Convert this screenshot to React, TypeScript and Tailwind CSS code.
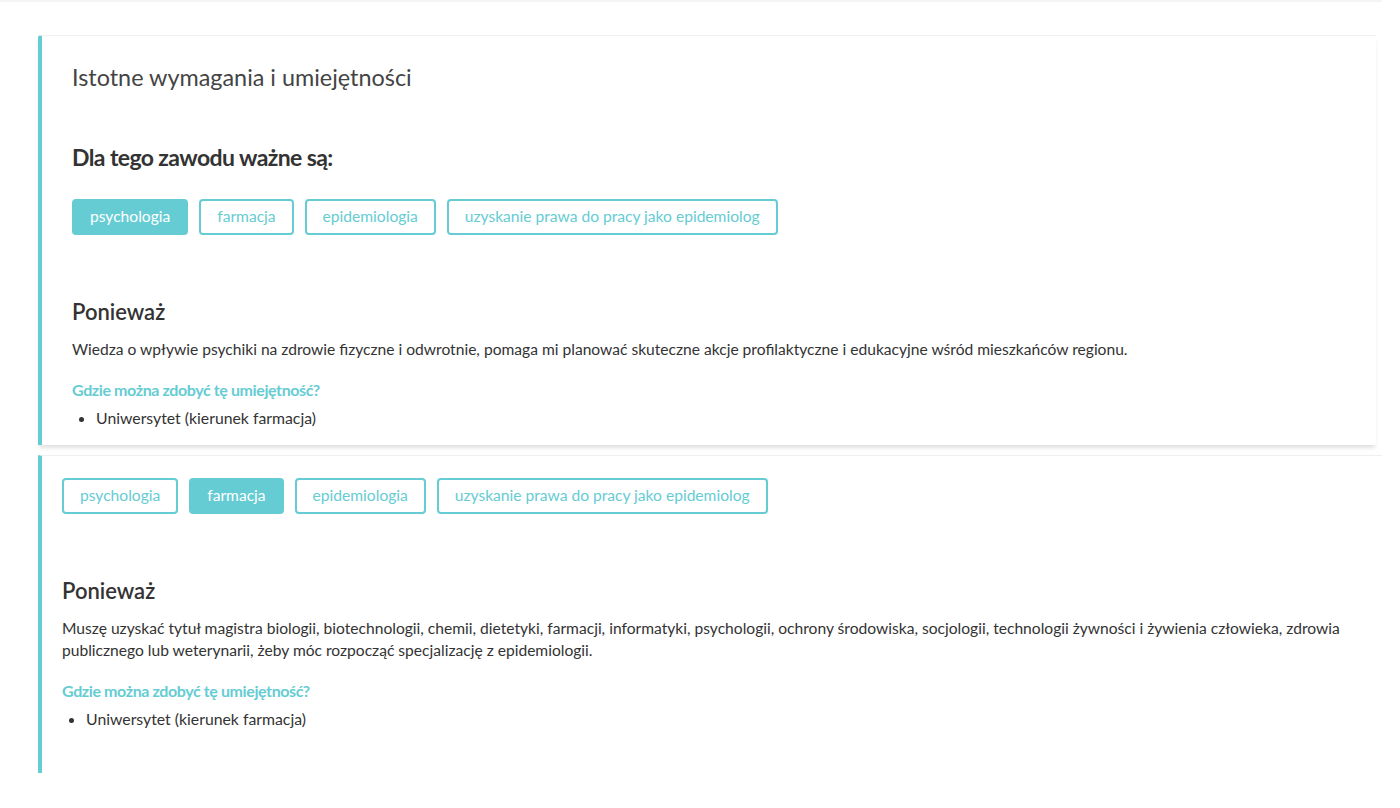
import React from 'react'

const skills = ['psychologia', 'farmacja', 'epidemiologia', 'uzyskanie prawa do pracy jako epidemiolog']

const Tags = ({ active }: { active: number }) => (
    <div className="flex gap-[11px]">
        {skills.map((s, i) => (
            <button
                key={s}
                className={
                    i === active
                        ? 'h-9 px-[16px] rounded-[4px] border-2 border-[#66ccd3] bg-[#66ccd3] text-white text-[15.6px]'
                        : 'h-9 px-[16px] rounded-[4px] border-2 border-[#66ccd3] bg-white text-[#66ccd3] text-[15.6px]'
                }
            >
                {s}
            </button>
        ))}
    </div>
)

const Reason = ({ text }: { text: string }) => (
    <>
        <h3 className="mt-[62px] text-[22px] leading-[30px] font-semibold text-[#333]">Ponieważ</h3>
        <p className="mt-[11px] text-[15.6px] leading-[22px] text-[#333]">{text}</p>
        <h4 className="mt-[19px] text-[16px] leading-[22px] font-bold tracking-[-0.4px] text-[#66ccd3]">
            Gdzie można zdobyć tę umiejętność?
        </h4>
        <ul className="mt-[6px] list-disc pl-[24px] text-[15.8px] leading-[22px] text-[#333]">
            <li>Uniwersytet (kierunek farmacja)</li>
        </ul>
    </>
)

export default function App() {
    return (
        <div className="min-h-[808px] bg-white" style={{ fontFamily: 'Lato, "Noto Sans", sans-serif' }}>
            <div className="w-[1382px] h-[2px] bg-[#f4f4f4]" />

            <div className="mt-[33px] ml-[38px] w-[1338px] border-t border-[#f0f0f0] border-l-4 border-l-[#66ccd3] rounded-tl-[3px] bg-white shadow-[0_4px_4px_-1px_rgba(0,0,0,0.12)] pt-[28px] pl-[30px] pr-6 pb-[16px]">
                <h2 className="text-[23.4px] leading-[26px] text-[#444]">Istotne wymagania i umiejętności</h2>
                <h3 className="mt-[52px] text-[23px] leading-[30px] font-bold tracking-[-0.6px] text-[#333]">
                    Dla tego zawodu ważne są:
                </h3>
                <div className="mt-[27px]">
                    <Tags active={0} />
                </div>
                <Reason text="Wiedza o wpływie psychiki na zdrowie fizyczne i odwrotnie, pomaga mi planować skuteczne akcje profilaktyczne i edukacyjne wśród mieszkańców regionu." />
            </div>

            <div className="mt-[10px] ml-[38px] w-[1344px] border-t border-[#f0f0f0] border-l-4 border-l-[#66ccd3] bg-white pt-[22px] pl-[20px] pr-4 pb-[43px]">
                <Tags active={1} />
                <Reason text="Muszę uzyskać tytuł magistra biologii, biotechnologii, chemii, dietetyki, farmacji, informatyki, psychologii, ochrony środowiska, socjologii, technologii żywności i żywienia człowieka, zdrowia publicznego lub weterynarii, żeby móc rozpocząć specjalizację z epidemiologii." />
            </div>
        </div>
    )
}
